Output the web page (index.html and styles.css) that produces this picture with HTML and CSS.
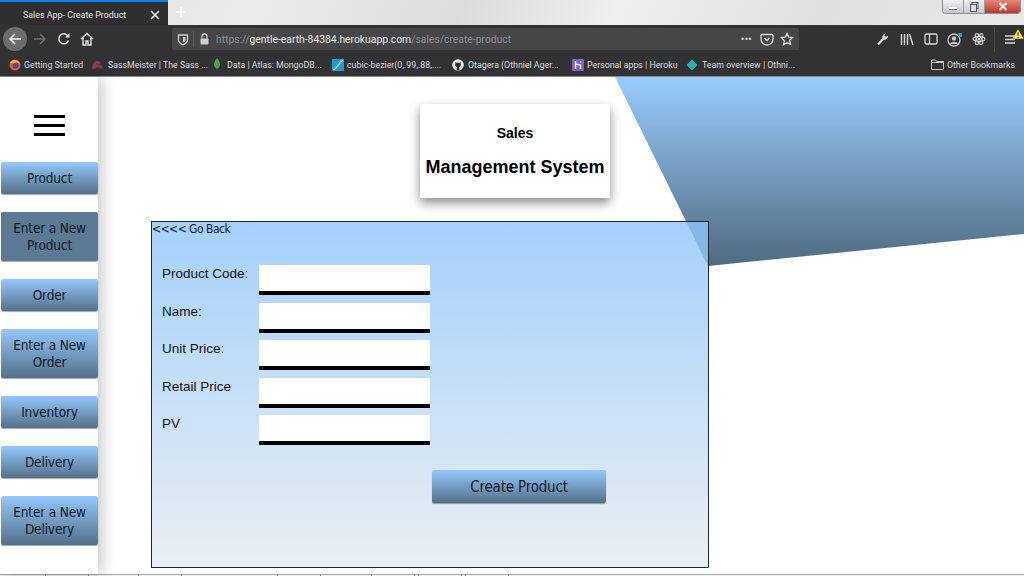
FILE: index.html

```html
<!DOCTYPE html>
<html lang="en">
<head>
    <meta charset="UTF-8">
    <meta name="viewport" content="width=device-width, initial-scale=1.0">
    <title>Sales App- Create Product</title>
    <link rel="stylesheet" href="styles.css">
</head>
<body>
    <div class="tabstrip">
        <div class="tab">
            <span class="tab-title">Sales App- Create Product</span>
            <svg class="tab-close" width="10" height="10" viewBox="0 0 10 10"><path d="M1 1l8 8M9 1l-8 8" stroke="#f2f2f2" stroke-width="1.6"/></svg>
        </div>
        <svg class="new-tab" width="12" height="12" viewBox="0 0 12 12"><path d="M6 1v10M1 6h10" stroke="#fff" stroke-width="1.6"/></svg>
        <div class="window-controls">
            <div class="win-btn win-min"><svg width="12" height="6" viewBox="0 0 12 6"><path d="M2 4h8" stroke="#fff" stroke-width="2"/><path d="M2 5.5h8" stroke="#667" stroke-width="1"/></svg></div>
            <div class="win-btn win-restore"><svg width="11" height="10" viewBox="0 0 11 10"><rect x="3" y="0.5" width="6" height="6" fill="none" stroke="#556" stroke-width="1"/><rect x="1.5" y="2.5" width="6" height="7" fill="#ddd" stroke="#556" stroke-width="1"/></svg></div>
            <div class="win-btn win-close"><svg width="10" height="9" viewBox="0 0 10 9"><path d="M1.5 1l7 7M8.5 1l-7 7" stroke="#fff" stroke-width="2"/></svg></div>
        </div>
    </div>

    <div class="toolbar">
        <div class="nav-icons">
            <div class="back-circle"><svg width="14" height="14" viewBox="0 0 14 14"><path d="M13 7H2M7 2L2 7l5 5" fill="none" stroke="#f4f4f4" stroke-width="1.5"/></svg></div>
            <svg class="tool-icon" width="14" height="14" viewBox="0 0 14 14"><path d="M1 7h11M7 2l5 5-5 5" fill="none" stroke="#6e6e70" stroke-width="1.5"/></svg>
            <svg class="tool-icon" width="14" height="14" viewBox="0 0 14 14"><path d="M11.5 8.5A5 5 0 1 1 10.5 3.4" fill="none" stroke="#e6e6e6" stroke-width="1.5"/><path d="M12.5 1v4.5H8z" fill="#e6e6e6"/></svg>
            <svg class="tool-icon" width="14" height="14" viewBox="0 0 14 14"><path d="M1 7l6-5.500L13 7M3 6v7h3V9h2v4h3V6" fill="none" stroke="#e6e6e6" stroke-width="1.4"/></svg>
        </div>
        <div class="urlbar">
            <svg width="12" height="13" viewBox="0 0 12 13"><path d="M1.500 2h9v5c0 2.500-2.500 4-4.500 5C4 11 1.500 9.500 1.500 7z" fill="none" stroke="#d0d0d0" stroke-width="1.3"/><path d="M6 4h2.500v3c0 1-1.500 2-2.500 2.500z" fill="#d0d0d0"/></svg>
            <span class="url-sep"></span>
            <svg width="11" height="12" viewBox="0 0 11 12"><path d="M3 5.500V3.500a2.500 2.500 0 0 1 5 0v2" fill="none" stroke="#d0d0d0" stroke-width="1.300"/><rect x="1.500" y="5.500" width="8" height="6" rx="1" fill="#d0d0d0"/></svg>
            <span class="url-text">https://<b>gentle-earth-84384.herokuapp.com</b>/sales/create-product</span>
            <span class="url-dots">•••</span>
            <svg width="14" height="13" viewBox="0 0 14 13"><path d="M1 2.500a1 1 0 0 1 1-1h10a1 1 0 0 1 1 1V6a6 6 0 0 1-12 0z" fill="none" stroke="#d8d8d8" stroke-width="1.300"/><path d="M4.500 5L7 7.500 9.500 5" fill="none" stroke="#d8d8d8" stroke-width="1.500"/></svg>
            <svg class="url-star" width="14" height="14" viewBox="0 0 14 14"><path d="M7 1.500l1.700 3.600 3.900.5-2.900 2.700.8 3.900L7 10.800l-3.500 1.900.8-3.900L1.400 5.600l3.900-.5z" fill="none" stroke="#d8d8d8" stroke-width="1.300"/></svg>
        </div>
        <div class="tool-right">
            <svg width="14" height="14" viewBox="0 0 14 14"><path d="M2 12.500L7.500 6.500" stroke="#d8d8d8" stroke-width="2.200"/><path d="M7 7a3.500 3.500 0 0 1 3-5.500L8.500 3.500l1.500 1.500 2-1.500A3.500 3.500 0 0 1 7.500 7.500z" fill="#d8d8d8"/></svg>
            <svg width="14" height="13" viewBox="0 0 14 13"><path d="M1.500 1v11M4.500 1v11M7.500 1v11M9.500 1l3.500 11" stroke="#d8d8d8" stroke-width="1.400"/></svg>
            <svg width="14" height="12" viewBox="0 0 14 12"><rect x="1" y="1" width="12" height="10" rx="1.500" fill="none" stroke="#d8d8d8" stroke-width="1.300"/><path d="M5.500 1v10" stroke="#d8d8d8" stroke-width="1.300"/></svg>
            <svg class="tool-avatar" width="16" height="15" viewBox="0 0 16 15"><circle cx="7" cy="8" r="6" fill="none" stroke="#c8c8c8" stroke-width="1.300"/><circle cx="7" cy="6.500" r="2.200" fill="#c8c8c8"/><path d="M3 12c1-3 7-3 8 0z" fill="#c8c8c8"/><circle cx="13" cy="3" r="2.200" fill="#2a9fd8"/></svg>
            <svg width="14" height="14" viewBox="0 0 14 14"><g fill="none" stroke="#d8d8d8" stroke-width="1.100"><ellipse cx="7" cy="7" rx="6" ry="2.400"/><ellipse cx="7" cy="7" rx="6" ry="2.400" transform="rotate(60 7 7)"/><ellipse cx="7" cy="7" rx="6" ry="2.400" transform="rotate(120 7 7)"/></g><circle cx="7" cy="7" r="1.300" fill="#d8d8d8"/></svg>
            <span class="tool-sep"></span>
            <div class="menu-btn">
                <svg width="12" height="11" viewBox="0 0 12 11"><path d="M1 2h10M1 5.500h10M1 9h10" stroke="#d8d8d8" stroke-width="1.300"/></svg>
                <svg class="warn" width="12" height="10" viewBox="0 0 12 10"><path d="M6 0.300L11.800 9.800H0.200z" fill="#f7e048"/><path d="M6 3.200v3.600M6 7.700v1.100" stroke="#333" stroke-width="1.100"/></svg>
            </div>
        </div>
    </div>

    <div class="bookmarks">
        <div class="bookmark mark-1">
            <svg width="12" height="12" viewBox="0 0 12 12"><circle cx="6" cy="6" r="5.500" fill="#e8622a"/><circle cx="6.500" cy="6.500" r="3" fill="#5b3fb5"/><path d="M1 4C3 0 9-.5 11 5 9 3 6 3 5 4.500 3.500 4 2 4 1 4z" fill="#fbb13a"/></svg>
            <span>Getting Started</span>
        </div>
        <div class="bookmark mark-2">
            <svg width="13" height="10" viewBox="0 0 12 10"><path d="M1 9C0 5 2 1 6 1c2 0 3 1 3 2s-2 1-3 2c2-.5 5 0 5 2s-2 2-3 1-3-1-4 0-2 2-3 1z" fill="#8e3a56"/></svg>
            <span>SassMeister | The Sass ...</span>
        </div>
        <div class="bookmark mark-3">
            <svg width="6" height="13" viewBox="0 0 6 13"><path d="M3 0C5 2.500 6 4.500 6 6.500S4.500 10 3.400 10.500L3 13l-.4-2.500C1.500 10 0 8.500 0 6.500S1 2.500 3 0z" fill="#4fa24a"/></svg>
            <span>Data | Atlas: MongoDB...</span>
        </div>
        <div class="bookmark mark-4">
            <svg width="12" height="12" viewBox="0 0 12 12"><rect width="12" height="12" fill="#1f9fc4"/><path d="M1 11C5 10 7 3 11 1" fill="none" stroke="#e8f6fa" stroke-width="1.200"/></svg>
            <span>cubic-bezier(0,.99,.88,....</span>
        </div>
        <div class="bookmark mark-5">
            <svg width="12" height="12" viewBox="0 0 12 12"><circle cx="6" cy="6" r="5.800" fill="#e8e8e8"/><path d="M3.500 3l1.200.7h2.600L8.500 3l.3 2.300c.2 1.700-.8 2.700-2 2.900.4.300.5.800.5 1.300v1.800H4.700V9.500C4.700 9 4.800 8.500 5.200 8.200c-1.200-.2-2.200-1.200-2-2.900z" fill="#2e2e30"/></svg>
            <span>Otagera (Othniel Ager...</span>
        </div>
        <div class="bookmark mark-6">
            <svg width="12" height="12" viewBox="0 0 12 12"><rect width="12" height="12" rx="1" fill="#7a63b8"/><path d="M3.500 2v8M8.500 10V6L3.500 5M8.500 2v1.500" fill="none" stroke="#f2eefb" stroke-width="1.500"/></svg>
            <span>Personal apps | Heroku</span>
        </div>
        <div class="bookmark mark-7">
            <svg width="12" height="12" viewBox="0 0 12 12"><path d="M6 0.500L11.500 6 6 11.500 0.500 6z" fill="#1fb5a8"/></svg>
            <span>Team overview | Othni...</span>
        </div>
        <div class="bookmark other-marks">
            <svg width="13" height="11" viewBox="0 0 13 11"><path d="M.5 10.500V1h4l1 1.500h7v8z M.5 3.500h12" fill="none" stroke="#c8c8c8" stroke-width="1"/></svg>
            <span>Other Bookmarks</span>
        </div>
    </div>

    <div class="page">
        <div class="corner-shape"></div>
        <div class="sidebar">
            <div class="hamburger"><span></span><span></span><span></span></div>
            <button class="nav-btn">Product</button>
            <button class="nav-btn nav-btn-tall active">Enter a New<br>Product</button>
            <button class="nav-btn">Order</button>
            <button class="nav-btn nav-btn-tall">Enter a New<br>Order</button>
            <button class="nav-btn">Inventory</button>
            <button class="nav-btn">Delivery</button>
            <button class="nav-btn nav-btn-tall">Enter a New<br>Delivery</button>
        </div>
        <div class="main">
            <div class="title-card">
                <h2>Sales</h2>
                <h1>Management System</h1>
            </div>
            <div class="panel">
                <a class="go-back">&lt;&lt;&lt;&lt; Go Back</a>
                <div class="product-form">
                    <div class="form-row"><label>Product Code:</label><input type="text"></div>
                    <div class="form-row"><label>Name:</label><input type="text"></div>
                    <div class="form-row"><label>Unit Price:</label><input type="text"></div>
                    <div class="form-row"><label>Retail Price</label><input type="text"></div>
                    <div class="form-row"><label>PV</label><input type="text"></div>
                </div>
                <button class="nav-btn create-btn">Create Product</button>
            </div>
        </div>
    </div>

    <div class="bottom-strip">
        <span class="strip-tab strip-1"></span>
        <span class="strip-tab strip-2"></span>
        <span class="strip-tab strip-3"></span>
        <span class="strip-tab strip-4"></span>
        <span class="strip-tab strip-5"></span>
        <span class="strip-tab strip-5"></span>
    </div>
</body>
</html>
```

FILE: styles.css

```css
html, body {
    margin: 0;
    padding: 0;
    height: 100%;
    overflow: hidden;
    background-color: #fff;
    font-family: "Liberation Sans", Arial, sans-serif;
}
body {
    display: flex;
    flex-direction: column;
    height: 576px;
}

/* browser chrome */
.tabstrip {
    display: flex;
    align-items: flex-start;
    height: 25px;
    background: linear-gradient(115deg, #dedede 0%, #ececec 25%, #dcdcdc 45%, #efefef 60%, #e0e0e0 80%, #e8e8e8 100%);
}
.tab {
    display: flex;
    align-items: center;
    width: 168px;
    height: 25px;
    box-sizing: border-box;
    padding: 2px 0 0 23px;
    background-color: #2f2f31;
    border-top: 2px solid #0a84ff;
    color: #e4e4e4;
    font: 8.9px Roboto, sans-serif;
}
.tab-title {
    width: 127px;
    white-space: nowrap;
}
.new-tab {
    margin: 6px 0 0 7px;
}
.window-controls {
    display: flex;
    margin-left: auto;
    margin-right: 3px;
    height: 13px;
    border: 1px solid #8e8e8e;
    border-top: 0;
    border-radius: 0 0 4px 4px;
    overflow: hidden;
}
.win-btn {
    display: flex;
    align-items: center;
    justify-content: center;
    height: 13px;
}
.win-min, .win-restore {
    width: 20px;
    background: linear-gradient(#f0f0f0, #c4c8cc);
    border-right: 1px solid #999;
}
.win-close {
    width: 35px;
    background: linear-gradient(#e0897c, #c4352a);
}

.toolbar {
    display: flex;
    align-items: center;
    height: 27px;
    box-sizing: border-box;
    padding-top: 1px;
    background-color: #323234;
}
.nav-icons {
    display: flex;
    flex-shrink: 0;
    align-items: center;
    width: 172px;
    padding-left: 3px;
    box-sizing: border-box;
}
.back-circle {
    display: flex;
    align-items: center;
    justify-content: center;
    width: 24px;
    height: 24px;
    border-radius: 50%;
    background-color: #6c6c6e;
}
.tool-icon {
    margin-left: 9.5px;
}
.back-circle + .tool-icon {
    margin-left: 6px;
}
.urlbar {
    display: flex;
    flex-shrink: 0;
    align-items: center;
    width: 627px;
    height: 22px;
    box-sizing: border-box;
    padding: 0 5px 0 5px;
    background-color: #464648;
    border-radius: 2px;
    gap: 5px;
}
.url-sep {
    width: 1px;
    height: 16px;
    margin-left: -1px;
    background-color: #5a5a5c;
}
.url-text {
    margin-left: 1px;
    color: #8f8f91;
    font: 10.35px Roboto, sans-serif;
    white-space: nowrap;
}
.url-text b {
    font-weight: normal;
    color: #e6e6e6;
}
.url-dots {
    margin-left: auto;
    margin-right: 3px;
    color: #d0d0d0;
    font-size: 9px;
    letter-spacing: 0.5px;
}
.url-star {
    margin-left: 1px;
}
.tool-right {
    display: flex;
    align-items: center;
    flex: 1;
    padding-left: 77px;
    gap: 10px;
}
.tool-avatar {
    margin: 0 -1px;
}
.tool-sep {
    flex-shrink: 0;
    width: 1px;
    height: 25px;
    margin: 0 -1px 0 -2px;
    background-color: #4c4c4e;
}
.menu-btn {
    position: relative;
    display: flex;
}
.warn {
    position: absolute;
    left: 8px;
    top: -5px;
}

.bookmarks {
    display: flex;
    align-items: center;
    height: 25px;
    box-sizing: border-box;
    padding: 1px 0 0 9px;
    background-color: #323234;
    border-bottom: 1px solid #8c8c8c;
    color: #dcdcdc;
    font: 8.8px Roboto, sans-serif;
}
.bookmark {
    display: flex;
    flex-shrink: 0;
    align-items: center;
    gap: 3px;
    white-space: nowrap;
}
.bookmark svg {
    flex-shrink: 0;
}
.mark-1 { width: 82px; }
.mark-2 { width: 123px; gap: 4px; }
.mark-3 { width: 118px; gap: 7px; }
.mark-4 { width: 120px; }
.mark-5 { width: 120px; gap: 4px; }
.mark-6 { width: 114px; }
.mark-7 { gap: 4px; }
.other-marks {
    margin-left: auto;
    margin-right: 9px;
}

/* page */
.page {
    position: relative;
    display: flex;
    height: 497px;
    background-color: #fff;
}
.corner-shape {
    position: absolute;
    top: 0;
    right: 0;
    width: 409px;
    height: 190px;
    background: linear-gradient(#99ccff, #4f6a80);
    clip-path: polygon(0 0, 100% 0, 100% 157px, 93px 189px);
}
.sidebar {
    position: relative;
    width: 98px;
    box-sizing: border-box;
    padding-left: 1px;
    background-color: #fff;
    box-shadow: 4px 0 14px rgba(0, 0, 0, 0.22);
}
.hamburger {
    display: flex;
    flex-direction: column;
    gap: 6px;
    width: 31px;
    margin: 38px 0 26px 33px;
}
.hamburger span {
    height: 3px;
    background-color: #000;
}
.nav-btn {
    display: block;
    width: 97px;
    height: 32px;
    margin: 0 0 18px;
    padding: 0;
    border: 0;
    border-radius: 2px;
    background: linear-gradient(#94c8fb, #54708a);
    box-shadow: 0 1px 1px rgba(0, 0, 0, 0.35);
    color: #0c1826;
    font-family: "DejaVu Sans", sans-serif;
    font-stretch: condensed;
    font-size: 13.5px;
    letter-spacing: -0.15px;
    line-height: 16.5px;
}
.nav-btn-tall {
    height: 49px;
}
.nav-btn.active {
    background: #5c7a94;
}

.main {
    position: relative;
    flex: 1;
}
.title-card {
    width: 190px;
    height: 94px;
    box-sizing: border-box;
    margin: 27px 0 0 322px;
    padding-top: 21px;
    background-color: #fff;
    box-shadow: 0 5px 10px rgba(0, 0, 0, 0.45);
    text-align: center;
}
.title-card h2 {
    margin: 0 0 15px;
    font-size: 14px;
    line-height: 17px;
}
.title-card h1 {
    margin: 0;
    font-size: 18px;
    line-height: 21px;
    white-space: nowrap;
}
.panel {
    width: 558px;
    height: 347px;
    box-sizing: border-box;
    margin: 23px 0 0 53px;
    border: 1px solid #20262c;
    background: linear-gradient(rgba(142, 196, 250, 0.8), rgba(229, 235, 239, 0.8));
}
.go-back {
    display: block;
    height: 43px;
    color: #0c1826;
    font-family: "DejaVu Sans", sans-serif;
    font-stretch: condensed;
    font-size: 12px;
    letter-spacing: -0.5px;
    line-height: 14px;
}
.product-form {
    display: flex;
    flex-direction: column;
    gap: 7.5px;
    padding-left: 10px;
}
.form-row {
    display: flex;
}
.form-row label {
    width: 97px;
    padding-top: 1px;
    font-size: 13.5px;
    line-height: 16px;
    color: #111;
}
.form-row input {
    display: block;
    width: 171px;
    height: 30px;
    box-sizing: border-box;
    padding: 1px 0 0;
    border: 0;
    border-bottom: 4px solid #000;
    background-color: #fff;
}
.create-btn {
    width: 174px;
    height: 33px;
    margin: 25px 0 0 280px;
    padding-top: 1px;
    font-size: 15px;
    letter-spacing: -0.2px;
}

.bottom-strip {
    display: flex;
    flex: 1;
    background-color: #f2f2f2;
    border-top: 1px solid #a8a8a8;
}
.strip-tab {
    width: 44px;
    box-sizing: border-box;
    border-left: 1px solid #777;
    border-right: 1px solid #777;
}
.strip-1 { margin-left: 45px; }
.strip-2 { margin-left: 49px; }
.strip-3 { margin-left: 95px; }
.strip-4 { margin-left: 50px; }
.strip-5 { margin-left: 3px; }
```
